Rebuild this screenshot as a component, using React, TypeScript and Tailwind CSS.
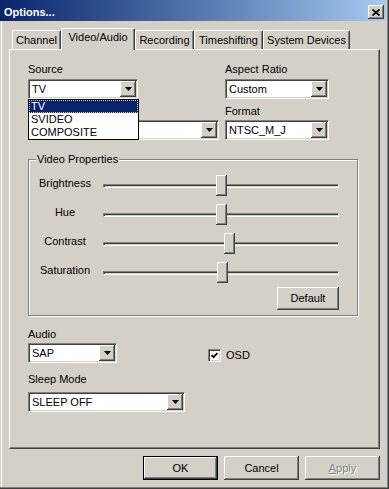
function Arrow() {
  return (
    <svg width="7" height="4" viewBox="0 0 7 4" className="block">
      <path d="M0 0h7L3.5 4z" fill="#000" />
    </svg>
  );
}

function Combo({ value, className }: { value: string; className: string }) {
  return (
    <div
      className={`flex h-[20px] items-center border border-t-[#808080] border-l-[#808080] border-r-white border-b-white bg-white shadow-[inset_1px_1px_0_#404040,inset_-1px_-1px_0_#d4d0c8] ${className}`}
    >
      <span className="flex-1 truncate pl-[3px]">{value}</span>
      <div className="mr-[1px] flex h-[16px] w-[16px] items-center justify-center bg-[#d4d0c8] shadow-[inset_-1px_-1px_0_#404040,inset_1px_1px_0_#fff,inset_-2px_-2px_0_#808080]">
        <Arrow />
      </div>
    </div>
  );
}

function Slider({ pos }: { pos: number }) {
  return (
    <div className="relative flex h-[21px] w-[236px] items-center">
      <div className="h-[4px] w-full border border-t-[#808080] border-l-[#808080] border-r-white border-b-white shadow-[inset_1px_1px_0_#404040]" />
      <div
        className="absolute top-0 h-[21px] w-[11px] bg-[#d4d0c8] shadow-[inset_-1px_-1px_0_#404040,inset_1px_1px_0_#fff,inset_-2px_-2px_0_#808080]"
        style={{ left: pos }}
      />
    </div>
  );
}

function Button({ label, isDefault, disabled }: { label: React.ReactNode; isDefault?: boolean; disabled?: boolean }) {
  return (
    <div className={`h-[24px] w-[75px] ${isDefault ? "border border-black" : ""}`}>
      <div
        className={`flex h-full w-full items-center justify-center bg-[#d4d0c8] shadow-[inset_-1px_-1px_0_#404040,inset_1px_1px_0_#fff,inset_-2px_-2px_0_#808080] ${
          disabled ? "text-[#808080] [text-shadow:1px_1px_0_#fff]" : ""
        }`}
      >
        {label}
      </div>
    </div>
  );
}

const tabs = [
  { label: "Channel", w: "w-[49px]" },
  { label: "Video/Audio", w: "w-[74px]", active: true },
  { label: "Recording", w: "w-[59px]" },
  { label: "Timeshifting", w: "w-[69px]" },
  { label: "System Devices", w: "w-[87px]" },
];

const sliders = [
  { label: "Brightness", pos: 113 },
  { label: "Hue", pos: 113 },
  { label: "Contrast", pos: 121 },
  { label: "Saturation", pos: 114 },
];

export default function App() {
  return (
    <div className="flex h-[489px] w-[389px] flex-col bg-[#d4d0c8] font-['Liberation_Sans',Arial,sans-serif] text-[11px] leading-[13px] text-black shadow-[inset_-1px_-1px_0_#404040,inset_-2px_-2px_0_#808080,inset_1px_0_0_#d4d0c8,inset_2px_0_0_#fff]">
      {/* Title bar */}
      <div className="flex h-[21px] w-[386px] items-center justify-between bg-gradient-to-r from-[#0a246a] to-[#a6caf0] pl-[4px] pr-[2px] pt-[3px]">
        <span className="font-bold text-white">Options...</span>
        <div className="flex h-[14px] w-[16px] items-center justify-center bg-[#d4d0c8] shadow-[inset_-1px_-1px_0_#404040,inset_1px_1px_0_#fff,inset_-2px_-2px_0_#808080]">
          <svg width="8" height="7" viewBox="0 0 8 7" className="block">
            <path d="M0.5 0.5L7.5 6.5M7.5 0.5L0.5 6.5" stroke="#000" strokeWidth="1.7" />
          </svg>
        </div>
      </div>

      {/* Tabs */}
      <div className="mt-[7px] flex items-end pl-[12px]">
        {tabs.map((t) =>
          t.active ? (
            <div
              key={t.label}
              className={`relative z-10 -mb-[1px] h-[22px] ${t.w} rounded-t-[2px] border-t border-l border-r border-t-white border-l-white border-r-[#404040] bg-[#d4d0c8] pt-[2px] text-center shadow-[inset_-1px_0_0_#808080]`}
            >
              {t.label}
            </div>
          ) : (
            <div
              key={t.label}
              className={`h-[19px] ${t.w} rounded-t-[2px] border-t border-l border-r border-t-white border-l-white border-r-[#404040] pt-[3px] text-center shadow-[inset_-1px_0_0_#808080]`}
            >
              {t.label}
            </div>
          )
        )}
      </div>

      {/* Tab panel */}
      <div className="ml-[9px] h-[400px] w-[371px] border border-t-white border-l-white border-r-[#404040] border-b-[#404040] pl-[18px] pt-[13px] shadow-[inset_-1px_-1px_0_#808080]">
        <div className="flex">
          <div className="flex w-[197px] flex-col">
            <span>Source</span>
            <div className="relative mt-[3px]">
              <Combo value="TV" className="w-[110px]" />
              <div className="absolute left-0 top-[20px] z-10 w-[111px] border border-black bg-white">
                <div className="h-[13px] bg-[#0a246a] pl-[2px] text-white outline-1 -outline-offset-1 outline-dotted outline-[#d4d0c8]">
                  TV
                </div>
                <div className="h-[13px] pl-[2px]">SVIDEO</div>
                <div className="h-[13px] pl-[2px]">COMPOSITE</div>
              </div>
            </div>
            <Combo value="" className="mt-[21px] w-[191px]" />
          </div>
          <div className="flex flex-col">
            <span>Aspect Ratio</span>
            <Combo value="Custom" className="mt-[3px] w-[104px]" />
            <span className="mt-[6px]">Format</span>
            <Combo value="NTSC_M_J" className="mt-[2px] w-[104px]" />
          </div>
        </div>

        {/* Video Properties group */}
        <div className="relative mt-[19px] h-[157px] w-[330px] border border-[#808080] pl-[7px] pt-[11px] shadow-[1px_1px_0_#fff,inset_1px_1px_0_#fff]">
          <span className="absolute -top-[7px] left-[7px] bg-[#d4d0c8] px-[1px]">Video Properties</span>
          {sliders.map((s) => (
            <div key={s.label} className="flex h-[29px] items-center">
              <span className="mb-[4px] w-[58px] text-center">{s.label}</span>
              <div className="ml-[9px]">
                <Slider pos={s.pos} />
              </div>
            </div>
          ))}
          <div className="flex justify-end pr-[18px]">
            <div className="flex h-[23px] w-[62px] items-center justify-center shadow-[inset_-1px_-1px_0_#404040,inset_1px_1px_0_#fff,inset_-2px_-2px_0_#808080]">
              Default
            </div>
          </div>
        </div>

        {/* Audio / OSD */}
        <div className="mt-[12px] flex">
          <div className="flex w-[180px] flex-col">
            <span>Audio</span>
            <Combo value="SAP" className="mt-[2px] w-[89px]" />
          </div>
          <div className="mt-[21px] flex h-[13px] items-center">
            <div className="flex h-[13px] w-[13px] items-center justify-center border border-t-[#808080] border-l-[#808080] border-r-white border-b-white bg-white shadow-[inset_1px_1px_0_#404040,inset_-1px_-1px_0_#d4d0c8]">
              <svg width="7" height="7" viewBox="0 0 7 7" className="block">
                <path d="M0.5 3L2.5 5.2L6.5 1" stroke="#000" strokeWidth="1.8" fill="none" />
              </svg>
            </div>
            <span className="ml-[5px]">OSD</span>
          </div>
        </div>
        <span className="mt-[10px] block">Sleep Mode</span>
        <Combo value="SLEEP OFF" className="mt-[6px] w-[157px]" />
      </div>

      {/* Dialog buttons */}
      <div className="ml-[9px] mt-[7px] flex w-[371px] justify-end gap-[6px]">
        <Button label="OK" isDefault />
        <Button label="Cancel" />
        <Button
          label={
            <span>
              <span className="underline">A</span>pply
            </span>
          }
          disabled
        />
      </div>
    </div>
  );
}
